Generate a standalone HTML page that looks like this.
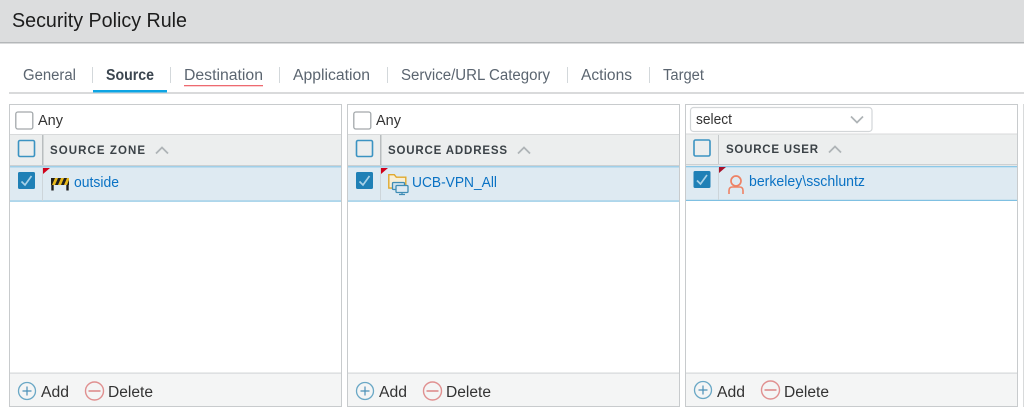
<!DOCTYPE html>
<html><head><meta charset="utf-8"><style>
html,body{margin:0;padding:0;background:#fff;width:1024px;height:413px;overflow:hidden}
svg{display:block}
text{font-family:"Liberation Sans",sans-serif}
</style></head><body>
<svg width="1024" height="413" viewBox="0 0 1024 413" xmlns="http://www.w3.org/2000/svg">
<defs>
<g id="addbtn"><circle cx="9" cy="9" r="8.500" fill="none" stroke="#6aa8c6" stroke-width="1.300"/><path d="M9 4.500v9M4.500 9h9" stroke="#4a90b8" stroke-width="1.200"/></g>
<g id="delbtn"><circle cx="9.500" cy="9" r="9" fill="none" stroke="#e09090" stroke-width="1.400"/><path d="M3.500 9h12" stroke="#d87474" stroke-width="1.300"/></g>
<g id="chk"><rect x="0" y="0" width="17" height="17" rx="1.500" fill="#1f80b6"/><path d="M3.500 9.500l3.500 3.500 6.500-9" fill="none" stroke="#a9d2e8" stroke-width="1.700"/></g>
<g id="barr"><rect x="0" y="1" width="18" height="7" fill="#1f1f1f"/><path d="M1 8l3-7h3l-3 7zM7 8l3-7h3l-3 7zM13 8l3-7h2v2l-2 5z" fill="#e8b91c"/><path d="M1.500 8v5.500M16.500 8v5.500" stroke="#1f1f1f" stroke-width="2.400"/></g>
</defs>
<rect width="1024" height="42" fill="#dcddde"/>
<rect y="42" width="1024" height="1.500" fill="#b4b7b9"/>
<text x="12" y="27" font-size="20.500" fill="#1c1c1c" textLength="175" lengthAdjust="spacingAndGlyphs">Security Policy Rule</text>
<rect x="9" y="92" width="1015" height="2" fill="#d9dadb"/>
<g font-size="15.500" fill="#5b6570">
<text x="23" y="80" textLength="53" lengthAdjust="spacingAndGlyphs">General</text>
<text x="106" y="80" font-weight="bold" font-size="15.500" fill="#3c4650" textLength="48" lengthAdjust="spacingAndGlyphs">Source</text>
<text x="184" y="80" textLength="79" lengthAdjust="spacingAndGlyphs">Destination</text>
<text x="293" y="80" textLength="77" lengthAdjust="spacingAndGlyphs">Application</text>
<text x="401" y="80" textLength="149" lengthAdjust="spacingAndGlyphs">Service/URL Category</text>
<text x="581" y="80" textLength="51" lengthAdjust="spacingAndGlyphs">Actions</text>
<text x="663" y="80" textLength="41" lengthAdjust="spacingAndGlyphs">Target</text>
</g>
<g fill="#d3d8db"><rect x="92" y="67" width="1" height="16"/><rect x="170" y="67" width="1" height="16"/><rect x="279" y="67" width="1" height="16"/><rect x="387" y="67" width="1" height="16"/><rect x="567" y="67" width="1" height="16"/><rect x="649" y="67" width="1" height="16"/></g>
<rect x="93" y="90" width="74" height="2.500" fill="#0ea5e4"/>
<rect x="184" y="85" width="79" height="1.300" fill="#ee6a70"/>

<!-- panel 1 -->
<g>
<rect x="9.500" y="104.500" width="332" height="302" fill="#fff" stroke="#c8cbcd"/>
<rect x="10" y="134" width="331" height="32" fill="#eceeee"/>
<rect x="10" y="134" width="331" height="1" fill="#d8dadb"/>
<rect x="10" y="165" width="331" height="1.500" fill="#cdd0d2"/>
<rect x="42" y="135" width="1.500" height="30" fill="#b9bdbf"/>
<rect x="10" y="167" width="331" height="34" fill="#deeaf2"/>
<rect x="10" y="166" width="331" height="1.500" fill="#a0cfe8"/>
<rect x="10" y="200.500" width="331" height="1.200" fill="#8cc6e4"/>
<rect x="42" y="167" width="1" height="34" fill="#cdd5da"/>
<rect x="10" y="373" width="331" height="33" fill="#f4f5f5"/>
<rect x="10" y="372.500" width="331" height="1.200" fill="#d5d8d9"/>
<rect x="15.800" y="112" width="17" height="17" rx="2" fill="#fff" stroke="#a3a8ab" stroke-width="1.300"/>
<text x="38" y="125" font-size="15" fill="#333" textLength="25" lengthAdjust="spacingAndGlyphs">Any</text>
<rect x="18.500" y="140.500" width="16" height="16" rx="1.500" fill="#eceeee" stroke="#3b93c2" stroke-width="1.600"/>
<text x="50" y="154" font-size="11.500" font-weight="bold" fill="#3b4247" textLength="95" lengthAdjust="spacing">SOURCE ZONE</text>
<path d="M156 153.500l6-6 6 6" fill="none" stroke="#aeb3b6" stroke-width="1.800"/>
<use href="#chk" x="18" y="172"/>
<path d="M43 168h7l-7 6z" fill="#d0021b"/>
<use href="#barr" x="51" y="177"/>
<text x="74" y="187" font-size="15" fill="#0a72c4" textLength="45" lengthAdjust="spacingAndGlyphs">outside</text>
<use href="#addbtn" x="18" y="382"/>
<text x="41" y="397" font-size="15.500" fill="#333" textLength="28" lengthAdjust="spacingAndGlyphs">Add</text>
<use href="#delbtn" x="85" y="382"/>
<text x="108" y="397" font-size="15.500" fill="#333" textLength="45" lengthAdjust="spacingAndGlyphs">Delete</text>
</g>

<!-- panel 2 -->
<g>
<rect x="347.500" y="104.500" width="332" height="302" fill="#fff" stroke="#c8cbcd"/>
<rect x="348" y="134" width="331" height="32" fill="#eceeee"/>
<rect x="348" y="134" width="331" height="1" fill="#d8dadb"/>
<rect x="348" y="165" width="331" height="1.500" fill="#cdd0d2"/>
<rect x="380" y="135" width="1.500" height="30" fill="#b9bdbf"/>
<rect x="348" y="167" width="331" height="34" fill="#deeaf2"/>
<rect x="348" y="166" width="331" height="1.500" fill="#a0cfe8"/>
<rect x="348" y="200.500" width="331" height="1.200" fill="#8cc6e4"/>
<rect x="380" y="167" width="1" height="34" fill="#cdd5da"/>
<rect x="348" y="373" width="331" height="33" fill="#f4f5f5"/>
<rect x="348" y="372.500" width="331" height="1.200" fill="#d5d8d9"/>
<rect x="353.800" y="112" width="17" height="17" rx="2" fill="#fff" stroke="#a3a8ab" stroke-width="1.300"/>
<text x="376" y="125" font-size="15" fill="#333" textLength="25" lengthAdjust="spacingAndGlyphs">Any</text>
<rect x="356.500" y="140.500" width="16" height="16" rx="1.500" fill="#eceeee" stroke="#3b93c2" stroke-width="1.600"/>
<text x="388" y="154" font-size="11.500" font-weight="bold" fill="#3b4247" textLength="119" lengthAdjust="spacing">SOURCE ADDRESS</text>
<path d="M518 153.500l6-6 6 6" fill="none" stroke="#aeb3b6" stroke-width="1.800"/>
<use href="#chk" x="356" y="172"/>
<path d="M381 168h7l-7 6z" fill="#d0021b"/>
<path d="M388.800 188v-13.300h5.500l2 2.500h9.500v11z" fill="#f8efd6" stroke="#e0a92e" stroke-width="1.400"/>
<rect x="392.500" y="182.500" width="12" height="7" rx="1" fill="#cfe3ee" stroke="#3f8db5" stroke-width="1.300"/>
<rect x="396" y="185.500" width="12" height="7" rx="1" fill="#deeaf2" stroke="#3f8db5" stroke-width="1.300"/>
<path d="M402 192.500v2M399 194.500h6" stroke="#3f8db5" stroke-width="1.200"/>
<text x="412" y="187" font-size="15" fill="#0a72c4" textLength="85" lengthAdjust="spacingAndGlyphs">UCB-VPN_All</text>
<use href="#addbtn" x="356" y="382"/>
<text x="379" y="397" font-size="15.500" fill="#333" textLength="28" lengthAdjust="spacingAndGlyphs">Add</text>
<use href="#delbtn" x="423" y="382"/>
<text x="446" y="397" font-size="15.500" fill="#333" textLength="45" lengthAdjust="spacingAndGlyphs">Delete</text>
</g>

<!-- panel 3 -->
<g>
<rect x="685.500" y="104.500" width="332" height="302" fill="#fff" stroke="#c8cbcd"/>
<rect x="686" y="134" width="331" height="31" fill="#eceeee"/>
<rect x="686" y="133.500" width="331" height="1" fill="#d8dadb"/>
<rect x="686" y="164" width="331" height="1.500" fill="#cdd0d2"/>
<rect x="718" y="135" width="1" height="29" fill="#c5c9cb"/>
<rect x="686" y="166" width="331" height="34" fill="#deeaf2"/>
<rect x="686" y="166" width="331" height="1.300" fill="#8cc8e8"/>
<rect x="686" y="199.800" width="331" height="1.200" fill="#7fc0e2"/>
<rect x="718" y="167" width="1" height="33" fill="#cdd5da"/>
<rect x="686" y="373" width="331" height="33" fill="#f4f5f5"/>
<rect x="686" y="372.500" width="331" height="1.200" fill="#d5d8d9"/>
<rect x="690.500" y="107.500" width="181.500" height="24" rx="3" fill="#fff" stroke="#d3d6d8" stroke-width="1.200"/>
<text x="696" y="124" font-size="15" fill="#333" textLength="36" lengthAdjust="spacingAndGlyphs">select</text>
<path d="M851 116.500l6 6 6-6" fill="none" stroke="#aeb3b6" stroke-width="1.700"/>
<rect x="694" y="140" width="16" height="16" rx="1.500" fill="#eceeee" stroke="#3b93c2" stroke-width="1.600"/>
<text x="726" y="153" font-size="11.500" font-weight="bold" fill="#3b4247" textLength="92" lengthAdjust="spacing">SOURCE USER</text>
<path d="M829 152.500l6-6 6 6" fill="none" stroke="#aeb3b6" stroke-width="1.800"/>
<use href="#chk" x="693.500" y="171"/>
<path d="M719 167h7l-7 6z" fill="#a5102a"/>
<circle cx="736" cy="181" r="5" fill="none" stroke="#ee8265" stroke-width="1.700"/>
<path d="M729 194v-3.500q0-3.500 3.500-3.500h7q3.500 0 3.500 3.500v3.500" fill="none" stroke="#ee8265" stroke-width="1.600"/>
<text x="749" y="186" font-size="15" fill="#0a72c4" textLength="116" lengthAdjust="spacingAndGlyphs">berkeley\sschluntz</text>
<use href="#addbtn" x="694" y="381"/>
<text x="717" y="397" font-size="15.500" fill="#333" textLength="28" lengthAdjust="spacingAndGlyphs">Add</text>
<use href="#delbtn" x="761" y="381"/>
<text x="784" y="397" font-size="15.500" fill="#333" textLength="45" lengthAdjust="spacingAndGlyphs">Delete</text>
</g>
<rect x="1023" y="104" width="1" height="303" fill="#d8dadb"/>
</svg>
</body></html>
